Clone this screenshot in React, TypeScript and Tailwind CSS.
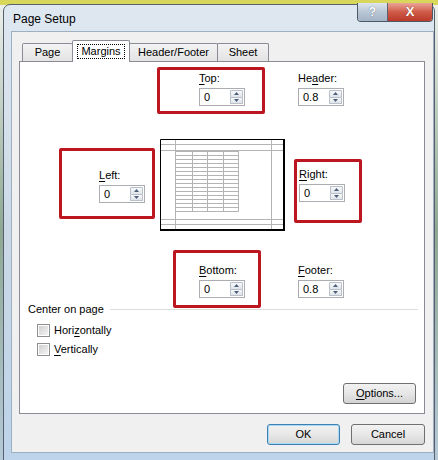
import React from 'react';

const U = ({ children }: { children: React.ReactNode }) => (
  <span className="underline decoration-1 underline-offset-[2px]">{children}</span>
);

function Arrow({ up }: { up?: boolean }) {
  return (
    <svg width="5" height="3" viewBox="0 0 5 3">
      <path d={up ? 'M0 3 L2.5 0 L5 3Z' : 'M0 0 L2.5 3 L5 0Z'} fill="#4c607e" />
    </svg>
  );
}

function Spin({ value }: { value: string }) {
  return (
    <div className="flex h-[18px] w-[46px] border border-[#abadb3] bg-white">
      <div className="flex-1 pl-[4px] text-[11px] leading-[16px]">{value}</div>
      <div className="flex w-[14px] flex-col py-px pr-px">
        <div className="flex flex-1 items-center justify-center rounded-t-[1px] border border-[#b9c0ca] bg-gradient-to-b from-[#f8f9fa] to-[#dfe4ea]">
          <Arrow up />
        </div>
        <div className="flex flex-1 items-center justify-center rounded-b-[1px] border border-t-0 border-[#b9c0ca] bg-gradient-to-b from-[#f8f9fa] to-[#dfe4ea]">
          <Arrow />
        </div>
      </div>
    </div>
  );
}

function Field({ label, value }: { label: React.ReactNode; value: string }) {
  return (
    <div className="flex flex-col gap-[2px]">
      <div className="h-[16px] leading-[16px]">{label}</div>
      <Spin value={value} />
    </div>
  );
}

function Check({ label }: { label: React.ReactNode }) {
  return (
    <div className="flex h-[19px] items-center gap-[4px]">
      <div className="flex h-[13px] w-[13px] items-center justify-center border border-[#8e8f8f] bg-white">
        <div className="h-[9px] w-[9px] bg-gradient-to-br from-[#d0d0d0] to-[#f4f4f4]" />
      </div>
      <span>{label}</span>
    </div>
  );
}

function Preview() {
  const rows = Array.from({ length: 16 }, (_, i) => 12 + i * 4);
  return (
    <svg width="125" height="92" viewBox="0 0 125 92" className="block">
      <rect x="0" y="0" width="125" height="92" fill="#fff" />
      <g stroke="#b4b4b4" strokeWidth="1">
        <line x1="1" y1="5.5" x2="123" y2="5.5" />
        <line x1="1" y1="11.5" x2="123" y2="11.5" />
        <line x1="1" y1="80.5" x2="123" y2="80.5" />
        <line x1="1" y1="85.5" x2="123" y2="85.5" />
        <line x1="15.5" y1="1" x2="15.5" y2="90" />
        <line x1="111.5" y1="1" x2="111.5" y2="90" />
        {[32.5, 47.5, 63.5, 78.5].map((x) => (
          <line key={x} x1={x} y1="11.5" x2={x} y2="72.5" />
        ))}
        {rows.map((y) => (
          <line key={y} x1="15.5" y1={y + 0.5} x2="78.5" y2={y + 0.5} />
        ))}
      </g>
      <path d="M0.5 91 V0.5 H124" stroke="#000" strokeWidth="1" fill="none" />
      <path d="M124 0 V91 H0" stroke="#000" strokeWidth="2" fill="none" />
    </svg>
  );
}

const redBox = 'border-[3px] border-[#bc1620] rounded-[2px]';

export default function App() {
  return (
    <div className="relative h-[460px] w-[438px] overflow-hidden bg-gradient-to-b from-[#eef1ee] via-[#8fa894] to-[#b5c9d8] text-[11px] text-black [font-family:'Liberation_Sans',Arial,sans-serif]">
      <div className="h-[5px] bg-[#d9d65c]" />

      {/* dialog window */}
      <div className="absolute left-[3px] top-[4px] h-[470px] w-[432px] rounded-t-[7px] border border-[#56616d] bg-gradient-to-b from-[#dfe8f1] via-[#cad8e6] to-[#bcd3ea]">
        {/* title bar */}
        <div className="relative flex h-[27px] items-center pl-[9px] pt-[1px] text-[12px]">
          Page Setup
          <div className="absolute right-[1px] top-[-2px] flex h-[19px] overflow-hidden rounded-b-[4px] border border-t-0 border-[#4f5966]">
            <div className="flex w-[30px] items-center justify-center border-r border-[#5a6573] bg-gradient-to-b from-[#dde4ec] via-[#b9c6d5] to-[#a3b3c6] text-[12px] font-bold text-white [text-shadow:0_0_1px_#44505e]">
              ?
            </div>
            <div className="flex w-[44px] items-center justify-center bg-gradient-to-b from-[#e8a598] via-[#cf5a48] to-[#b9392b] text-[13px] font-bold text-white [text-shadow:0_0_1px_#6e1a12]">
              X
            </div>
          </div>
        </div>

        {/* client area */}
        <div className="ml-[8px] flex h-[420px] w-[421px] flex-col bg-[#f0f0f0] pl-[7px] pr-[8px] pt-[8px] shadow-[0_0_0_1px_#9eafc1]">
          {/* tabs */}
          <div className="relative z-10 flex h-[21px] items-end pl-[3px]">
            <div className="flex h-[18px] w-[51px] items-center justify-center rounded-t-[2px] border border-b-0 border-[#898c95] bg-gradient-to-b from-[#f3f3f3] to-[#e3e3e3]">
              Page
            </div>
            <div className="-mb-px -ml-px flex h-[22px] w-[58px] items-center justify-center rounded-t-[2px] border border-b-0 border-[#898c95] bg-white">
              <span className="border border-dotted border-black px-[3px] leading-[13px]">Margins</span>
            </div>
            <div className="-ml-px flex h-[18px] w-[89px] items-center justify-center rounded-t-[2px] border border-b-0 border-[#898c95] bg-gradient-to-b from-[#f3f3f3] to-[#e3e3e3]">
              Header/Footer
            </div>
            <div className="-ml-px flex h-[18px] w-[52px] items-center justify-center rounded-t-[2px] border border-b-0 border-[#898c95] bg-gradient-to-b from-[#f3f3f3] to-[#e3e3e3]">
              Sheet
            </div>
          </div>

          {/* tab panel */}
          <div className="flex h-[353px] w-[406px] flex-col border border-[#898c95] bg-white">
            {/* row 1: top + header */}
            <div className="flex h-[77px] items-start pt-[5px]">
              <div className={`ml-[137px] h-[47px] w-[108px] pl-[39px] ${redBox}`}>
                <Field label={<><U>T</U>op:</>} value="0" />
              </div>
              <div className="ml-[33px] mt-[3px]">
                <Field label={<>He<U>a</U>der:</>} value="0.8" />
              </div>
            </div>

            {/* row 2: left + preview + right */}
            <div className="flex h-[92px] items-start">
              <div className={`ml-[39px] mt-[9px] h-[71px] w-[96px] pl-[37px] pt-[16px] ${redBox}`}>
                <Field label={<><U>L</U>eft:</>} value="0" />
              </div>
              <div className="ml-[5px]">
                <Preview />
              </div>
              <div className={`ml-[9px] mt-[20px] h-[64px] w-[68px] pl-[2px] pt-[4px] ${redBox}`}>
                <Field label={<><U>R</U>ight:</>} value="0" />
              </div>
            </div>

            {/* row 3: bottom + footer */}
            <div className="mt-[19px] flex h-[58px] items-start">
              <div className={`ml-[153px] h-[58px] w-[88px] pl-[23px] pt-[9px] ${redBox}`}>
                <Field label={<><U>B</U>ottom:</>} value="0" />
              </div>
              <div className="ml-[37px] mt-[12px]">
                <Field label={<><U>F</U>ooter:</>} value="0.8" />
              </div>
            </div>

            {/* center on page */}
            <div className="mt-[-7px] flex h-[16px] items-center pl-[8px] pr-[6px]">
              <span>Center on page</span>
              <div className="ml-[6px] h-px flex-1 bg-[#dcdcdc]" />
            </div>
            <div className="ml-[17px] mt-[4px] flex flex-col">
              <Check label={<>Hori<U>z</U>ontally</>} />
              <Check label={<><U>V</U>ertically</>} />
            </div>

            <div className="mt-auto flex justify-end pb-[9px] pr-[8px]">
              <div className="flex h-[21px] w-[73px] items-center justify-center rounded-[3px] border border-[#707070] bg-gradient-to-b from-[#f2f2f2] via-[#e6e6e6] to-[#d3d3d3]">
                <span><U>O</U>ptions...</span>
              </div>
            </div>
          </div>

          {/* dialog buttons */}
          <div className="mt-[10px] flex justify-end gap-[11px]">
            <div className="flex h-[21px] w-[73px] items-center justify-center rounded-[3px] border border-[#3c7fb1] bg-gradient-to-b from-[#f2f2f2] via-[#e8e8e8] to-[#d6d6d6] shadow-[inset_0_0_0_1px_#a9d9f5]">
              OK
            </div>
            <div className="flex h-[21px] w-[74px] items-center justify-center rounded-[3px] border border-[#707070] bg-gradient-to-b from-[#f2f2f2] via-[#e8e8e8] to-[#d6d6d6]">
              Cancel
            </div>
          </div>
        </div>
      </div>
    </div>
  );
}
